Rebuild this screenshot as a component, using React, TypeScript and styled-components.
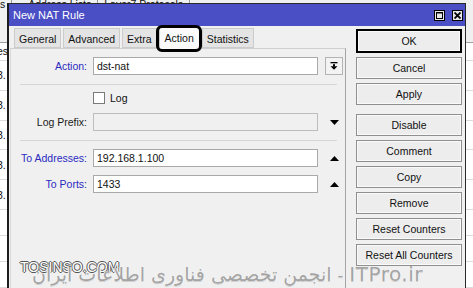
import React from 'react';
import styled, { createGlobalStyle } from 'styled-components';

const Global = createGlobalStyle`
  html, body { margin: 0; padding: 0; background: #ffffff; overflow: hidden; }
  body { font-family: "Liberation Sans", Arial, sans-serif; }
`;

const Desktop = styled.div`
  position: relative;
  width: 473px;
  height: 288px;
  overflow: hidden;
  background: #ffffff;
`;

/* ---------- background window (mostly hidden) ---------- */
const BackWindow = styled.div`
  display: flex;
  flex-direction: column;
  width: 100%;
  height: 100%;
  font-size: 10.5px;
  color: #111;
`;

const BackHeader = styled.div`
  height: 10px;
  background: #f0f0f0;
  display: flex;
  align-items: flex-start;
  line-height: 8px;
  gap: 6px;
`;

const BackHeaderItem = styled.span<{ $indent?: number }>`
  margin-left: ${p => p.$indent ?? 0}px;
  border-right: 1px solid #999;
  padding-right: 6px;
`;

const BackToolbar = styled.div`
  height: 32px;
  background: #f0f0f0;
  border-bottom: 1px solid #a0a0a0;
`;

const BackRow = styled.div<{ $h: number }>`
  height: ${p => p.$h}px;
  box-sizing: border-box;
  border-bottom: 1px solid #dcdcdc;
  display: flex;
  align-items: center;
  text-indent: -3px;
  white-space: nowrap;
`;

/* ---------- dialog ---------- */
const Dialog = styled.div`
  position: absolute;
  left: 7px;
  top: 3px;
  width: 459px;
  height: 300px;
  box-sizing: border-box;
  display: flex;
  flex-direction: column;
  background: #f0f0f0;
  border-left: 2px solid #1c1c1c;
  border-right: 1px solid #2a2a2a;
  border-top: 1px solid #2a2a2a;
`;

const TitleBar = styled.div`
  height: 22px;
  flex: none;
  background: #4b4fc6;
  display: flex;
  align-items: center;
  padding: 0 2px 0 4px;
`;

const Title = styled.div`
  flex: 1;
  color: #ffffff;
  font-size: 11px;
`;

const TitleButtons = styled.div`
  display: flex;
  gap: 7px;
  margin-top: 1px;
`;

const TitleButton = styled.div`
  width: 11px;
  height: 11px;
  box-sizing: border-box;
  border: 1px solid #000;
  background: #e8e8e8;
  display: flex;
  align-items: center;
  justify-content: center;
`;

const Body = styled.div`
  flex: 1;
  display: flex;
`;

const LeftPane = styled.div`
  width: 337px;
  display: flex;
  flex-direction: column;
`;

const TabStrip = styled.div`
  height: 22px;
  display: flex;
  align-items: flex-end;
  gap: 2px;
  padding-left: 5px;
  position: relative;
  z-index: 1;
`;

const Tab = styled.div<{ $active?: boolean }>`
  position: relative;
  box-sizing: border-box;
  height: ${p => (p.$active ? 23 : 20)}px;
  margin-bottom: ${p => (p.$active ? -1 : 0)}px;
  padding: 0 ${p => (p.$active ? 5 : 4)}px;
  display: flex;
  align-items: center;
  font-size: 10.5px;
  color: #111;
  background: ${p => (p.$active ? '#fbfbfb' : '#e4e4e4')};
  border: 1px solid #cbcbcb;
  border-bottom: ${p => (p.$active ? 'none' : '1px solid #cbcbcb')};
  padding-top: ${p => (p.$active ? 0 : 1)}px;
`;

const Highlight = styled.div`
  position: absolute;
  left: -4px;
  right: -3px;
  top: -2px;
  bottom: -3px;
  border: 3px solid #000;
  border-radius: 6px;
`;

const Panel = styled.div`
  flex: 1;
  margin-left: 1px;
  background: #f0f0f0;
  border-top: 1px solid #cfcfcf;
  border-left: 1px solid #d8d8d8;
  border-right: 1px solid #a5a5a5;
  display: flex;
  flex-direction: column;
`;

const Row = styled.div<{ $mt: number }>`
  margin-top: ${p => p.$mt}px;
  height: 18px;
  display: grid;
  grid-template-columns: 76px 225px 18px;
  column-gap: 6px;
  align-items: center;
`;

const Label = styled.div<{ $blue?: boolean }>`
  text-align: right;
  font-size: 10.5px;
  color: ${p => (p.$blue ? '#2b2bc0' : '#1a1a1a')};
  white-space: nowrap;
`;

const Input = styled.div<{ $disabled?: boolean }>`
  height: 18px;
  box-sizing: border-box;
  border: 1px solid ${p => (p.$disabled ? '#bdbdbd' : '#a9a9a9')};
  background: ${p => (p.$disabled ? '#f0f0f0' : '#ffffff')};
  font-size: 10.5px;
  color: #111;
  padding-left: 3px;
  display: flex;
  align-items: center;
`;

const DropButton = styled.div`
  width: 18px;
  height: 18px;
  box-sizing: border-box;
  margin-left: 1px;
  border: 1px solid #b3b3b3;
  background: #f3f3f3;
  display: flex;
  align-items: center;
  justify-content: center;
`;

const ArrowCell = styled.div`
  display: flex;
  align-items: center;
  justify-content: center;
  margin-left: 2px;
`;

const Separator = styled.div<{ $mt: number }>`
  margin-top: ${p => p.$mt}px;
  margin-left: 9px;
  width: 317px;
  height: 1px;
  background: #d6d6d6;
`;

const CheckWrap = styled.div`
  display: flex;
  align-items: center;
  gap: 5px;
  font-size: 10.5px;
  color: #111;
`;

const CheckBox = styled.div`
  width: 12px;
  height: 12px;
  box-sizing: border-box;
  border: 1px solid #7a7a7a;
  background: #ffffff;
`;

const RightPane = styled.div`
  width: 106px;
  margin-left: 10px;
  padding-top: 3px;
  display: flex;
  flex-direction: column;
  gap: 4px;
`;

const Button = styled.div<{ $default?: boolean; $mt?: number }>`
  height: ${p => (p.$default ? 24 : 22)}px;
  margin-top: ${p => p.$mt ?? 0}px;
  box-sizing: border-box;
  border: ${p => (p.$default ? '2px solid #000' : '1px solid #8f8f8f')};
  background: #ededed;
  box-shadow: inset 0 0 0 1px #fafafa;
  display: flex;
  align-items: center;
  justify-content: center;
  font-size: 10.5px;
  color: #111;
  white-space: nowrap;
`;

/* ---------- watermark overlay ---------- */
const Watermark = styled.div`
  position: absolute;
  left: 0;
  top: 258px;
  width: 473px;
  height: 30px;
  pointer-events: none;
`;

const SiteLatin = styled.div`
  position: absolute;
  left: 20px;
  top: 1px;
  font-family: "Liberation Sans", Arial, sans-serif;
  font-size: 14px;
  color: #ffffff;
  text-shadow: -1px 0 #555, 1px 0 #555, 0 -1px #555, 0 1px #555;
`;

const PersianLine = styled.div`
  position: absolute;
  right: 50px;
  top: 4px;
  display: flex;
  align-items: baseline;
  gap: 6px;
  color: #a4a4a4;
  white-space: nowrap;
  text-shadow: -1px 0 #f4f4f4, 1px 0 #f4f4f4, 0 1px #d0d0d0;
`;

const Persian = styled.span`
  direction: rtl;
  font-family: "DejaVu Sans", "Noto Sans", sans-serif;
  font-size: 19px;
`;

const Dash = styled.span`
  font-family: "DejaVu Sans", sans-serif;
  font-size: 16px;
`;

const SiteName = styled.span`
  font-family: "DejaVu Sans", sans-serif;
  font-size: 20px;
  letter-spacing: 0.5px;
`;

const Triangle = ({ up }: { up?: boolean }) => (
  <svg width="9" height="5" viewBox="0 0 9 5">
    {up ? <polygon points="0,5 9,5 4.5,0" fill="#000" /> : <polygon points="0,0 9,0 4.5,5" fill="#000" />}
  </svg>
);

const DropIcon = () => (
  <svg width="8" height="8" viewBox="0 0 8 8">
    <rect x="0.5" y="0" width="7" height="1.3" fill="#000" />
    <rect x="3" y="2.2" width="2" height="2.3" fill="#000" />
    <polygon points="0.5,4.3 7.5,4.3 4,7.8" fill="#000" />
  </svg>
);

const backRows = [
  { h: 18, t: 'es' },
  { h: 30, t: '3.' },
  { h: 30, t: '3.' },
  { h: 30, t: '3.' },
  { h: 30, t: '3.' },
  { h: 30, t: '3.' },
  { h: 26, t: '' },
  { h: 26, t: '' },
  { h: 26, t: '' },
];

const buttons: { label: string; def?: boolean; mt?: number }[] = [
  { label: 'OK', def: true },
  { label: 'Cancel' },
  { label: 'Apply' },
  { label: 'Disable', mt: 5 },
  { label: 'Comment' },
  { label: 'Copy' },
  { label: 'Remove' },
  { label: 'Reset Counters' },
  { label: 'Reset All Counters' },
];

export default function App() {
  return (
    <Desktop>
      <Global />
      <BackWindow>
        <BackHeader>
          <BackHeaderItem>s</BackHeaderItem>
          <BackHeaderItem $indent={10}>Address Lists</BackHeaderItem>
          <BackHeaderItem>Layer7 Protocols</BackHeaderItem>
        </BackHeader>
        <BackToolbar />
        {backRows.map((r, i) => (
          <BackRow key={i} $h={r.h}>{r.t}</BackRow>
        ))}
      </BackWindow>

      <Dialog>
        <TitleBar>
          <Title>New NAT Rule</Title>
          <TitleButtons>
            <TitleButton>
              <svg width="7" height="7" viewBox="0 0 7 7">
                <rect x="0.5" y="0.5" width="6" height="6" fill="none" stroke="#000" strokeWidth="1" />
                <rect x="0" y="0" width="7" height="1.5" fill="#000" />
              </svg>
            </TitleButton>
            <TitleButton>
              <svg width="7" height="7" viewBox="0 0 7 7">
                <path d="M0.5 0.5 L6.5 6.5 M6.5 0.5 L0.5 6.5" stroke="#000" strokeWidth="1.8" />
              </svg>
            </TitleButton>
          </TitleButtons>
        </TitleBar>
        <Body>
          <LeftPane>
            <TabStrip>
              <Tab>General</Tab>
              <Tab>Advanced</Tab>
              <Tab>Extra</Tab>
              <Tab $active>
                Action
                <Highlight />
              </Tab>
              <Tab>Statistics</Tab>
            </TabStrip>
            <Panel>
              <Row $mt={8}>
                <Label $blue>Action:</Label>
                <Input>dst-nat</Input>
                <DropButton><DropIcon /></DropButton>
              </Row>
              <Separator $mt={9} />
              <Row $mt={4}>
                <span />
                <CheckWrap>
                  <CheckBox />
                  Log
                </CheckWrap>
              </Row>
              <Row $mt={6}>
                <Label>Log Prefix:</Label>
                <Input $disabled />
                <ArrowCell><Triangle /></ArrowCell>
              </Row>
              <Separator $mt={9} />
              <Row $mt={8}>
                <Label $blue>To Addresses:</Label>
                <Input>192.168.1.100</Input>
                <ArrowCell><Triangle up /></ArrowCell>
              </Row>
              <Row $mt={8}>
                <Label $blue>To Ports:</Label>
                <Input>1433</Input>
                <ArrowCell><Triangle up /></ArrowCell>
              </Row>
            </Panel>
          </LeftPane>
          <RightPane>
            {buttons.map(b => (
              <Button key={b.label} $default={b.def} $mt={b.mt}>{b.label}</Button>
            ))}
          </RightPane>
        </Body>
      </Dialog>

      <Watermark>
        <SiteLatin>TOSINSO.COM</SiteLatin>
        <PersianLine>
          <Persian>انجمن تخصصی فناوری اطلاعات ایران</Persian>
          <Dash>-</Dash>
          <SiteName>ITPro.ir</SiteName>
        </PersianLine>
      </Watermark>
    </Desktop>
  );
}
